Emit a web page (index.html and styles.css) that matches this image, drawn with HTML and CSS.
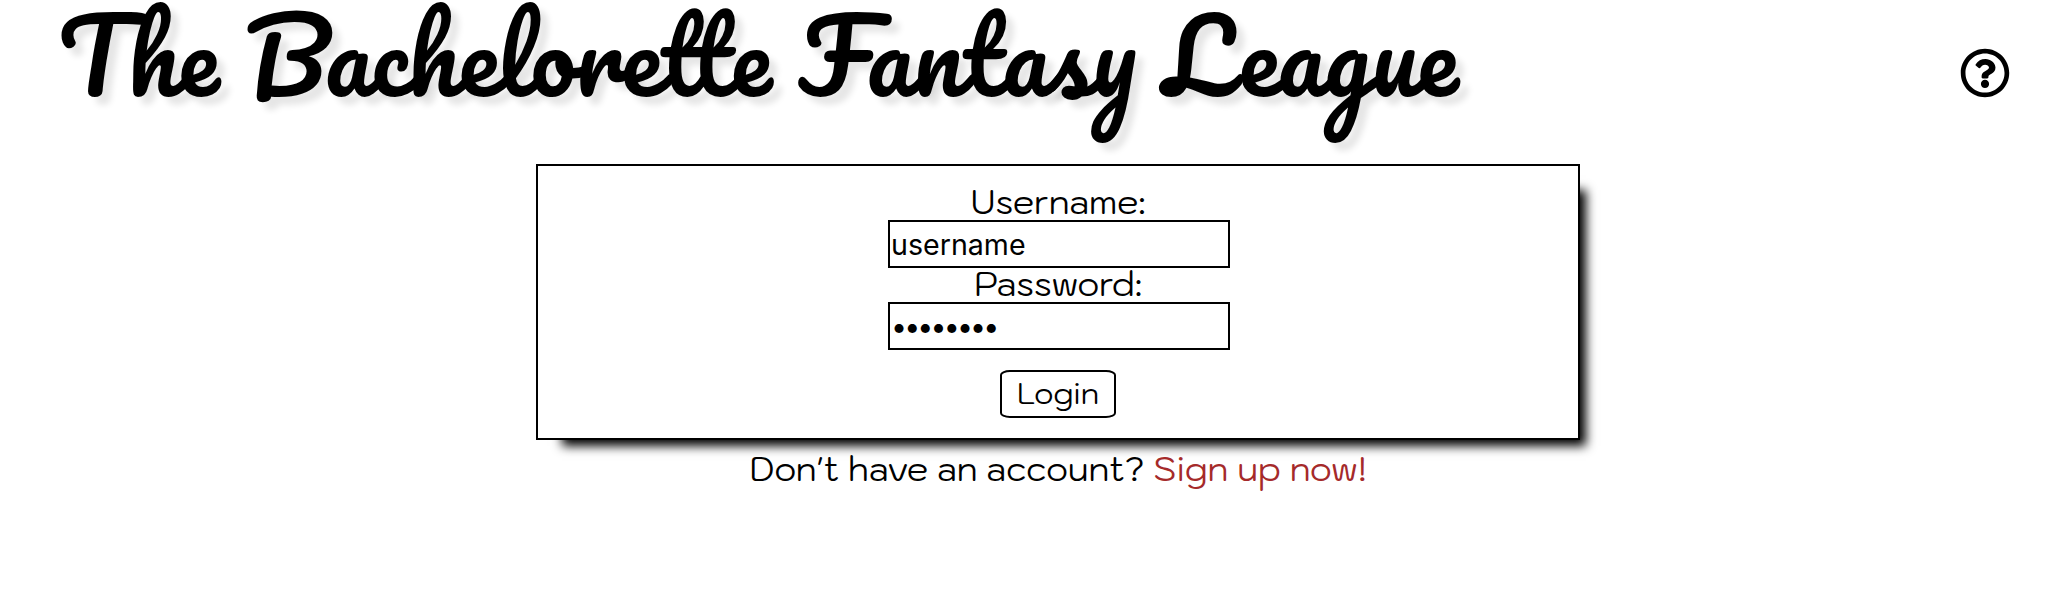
FILE: index.html
```html
<!DOCTYPE html>
<html lang="en">
<head>
<meta charset="utf-8">
<title>The Bachelorette Fantasy League</title>
<link rel="stylesheet" href="styles.css">
</head>
<body>
<header class="header">
  <h1 class="title">The Bachelorette Fantasy League</h1>
  <a class="help" aria-label="Help">
    <svg width="50" height="50" viewBox="0 0 512 512"><path d="M256 8C119.043 8 8 119.083 8 256c0 136.997 111.043 248 248 248s248-111.003 248-248C504 119.083 392.957 8 256 8zm0 448c-110.532 0-200-89.431-200-200 0-110.495 89.472-200 200-200 110.491 0 200 89.471 200 200 0 110.53-89.431 200-200 200zm107.244-255.2c0 67.052-72.421 68.084-72.421 92.863V300c0 6.627-5.373 12-12 12h-45.647c-6.627 0-12-5.373-12-12v-8.659c0-35.745 27.1-50.034 47.579-61.516 17.561-9.845 28.324-16.541 28.324-29.579 0-17.246-21.999-28.693-39.784-28.693-23.189 0-33.894 10.977-48.942 29.969-4.057 5.12-11.46 6.071-16.666 2.124l-27.824-21.098c-5.107-3.872-6.251-11.066-2.644-16.363C184.846 131.491 214.94 112 261.794 112c49.071 0 101.45 38.304 101.45 88.8zM298 368c0 23.159-18.841 42-42 42s-42-18.841-42-42 18.841-42 42-42 42 18.841 42 42z"/></svg>
  </a>
</header>
<main class="main">
  <form class="login">
    <label class="label" for="user">Username:</label>
    <input class="field" id="user" type="text" value="username">
    <label class="label" for="pass">Password:</label>
    <input class="field field-pass" id="pass" type="password" value="password">
    <button class="submit" type="button">Login</button>
  </form>
  <p class="signup">Don't have an account? <a class="link">Sign up now!</a></p>
</main>
</body>
</html>
```
FILE: styles.css
```css
* { box-sizing: border-box; }
body {
  margin: 0;
  height: 606px;
  overflow: hidden;
  background: #fff;
  color: #000;
  font-family: Kodchasan, Inter, sans-serif;
}
.header {
  display: flex;
  justify-content: space-between;
  height: 164px;
  padding: 0 58px 0 58px;
}
.title {
  margin: 0;
  font: 400 100px/110px Pacifico, cursive;
  white-space: nowrap;
  text-shadow: 8px 8px 6px rgba(0, 0, 0, 0.1);
}
.help { height: 50px; margin-top: 48px; }
.help svg { display: block; }
.main {
  display: flex;
  flex-direction: column;
  align-items: center;
  padding-left: 48px;
}
.login {
  display: flex;
  flex-direction: column;
  align-items: center;
  width: 1044px;
  height: 276px;
  padding-top: 20px;
  border: 2px solid #000;
  box-shadow: 16px 16px 10px -10px #000;
}
.label {
  height: 34px;
  line-height: 31px;
  font-size: 34px;
  white-space: nowrap;
}
.field {
  display: block;
  width: 342px;
  height: 48px;
  margin-left: 2px;
  padding: 3px 2px 2px 1px;
  border: 2px solid #000;
  border-radius: 0;
  outline: none;
  background: #fff;
  color: #000;
  font: 400 28.6px Inter, sans-serif;
}
.field-pass { letter-spacing: -2.9px; }
.submit {
  width: 116px;
  height: 48px;
  margin-top: 20px;
  padding: 0 0 3px;
  border: 2px solid #000;
  border-radius: 10px / 5px;
  background: #fff;
  color: #000;
  font: 400 30px Kodchasan, Inter, sans-serif;
}
.signup {
  margin: 12px 0 0;
  font-size: 34px;
  line-height: 33px;
  white-space: nowrap;
}
.link { color: brown; }
```
